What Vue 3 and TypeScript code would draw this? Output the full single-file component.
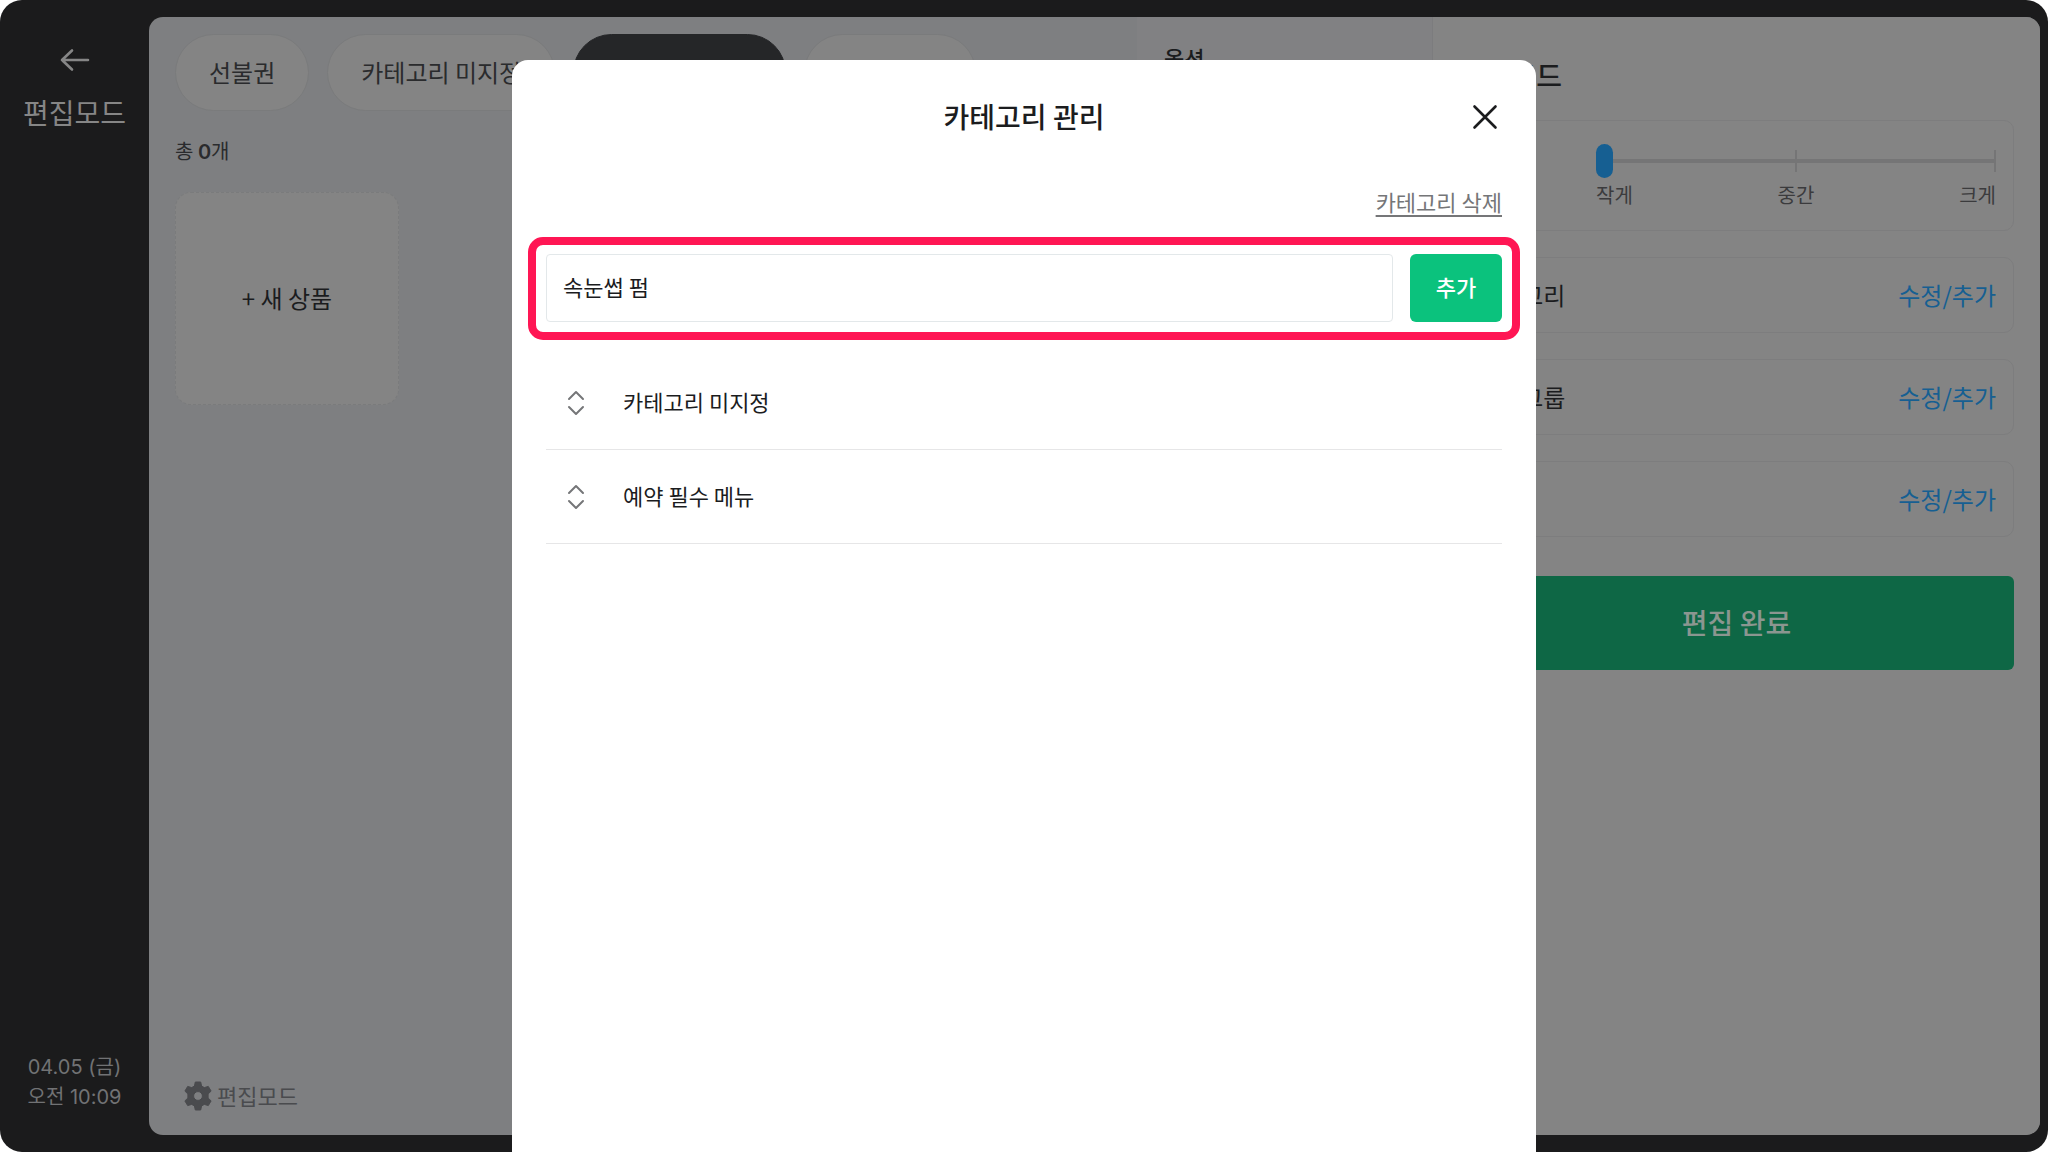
<script setup lang="ts">
import { ref } from 'vue'

const newCategory = ref('속눈썹 펌')
const cardSize = ref(0)

const categories = ref(['카테고리 미지정', '예약 필수 메뉴'])
const sizes = ['작게', '중간', '크게']
const settings = [
  { id: 'category', label: '카테고리' },
  { id: 'option', label: '옵션그룹' },
  { id: 'etc', label: '' },
]

function addCategory(): void {
  const name = newCategory.value.trim()
  if (name) {
    categories.value.push(name)
    newCategory.value = ''
  }
}
</script>

<template>
  <div class="frame">
    <aside class="sidebar">
      <div class="side-top">
        <button class="back" type="button" aria-label="뒤로">
          <svg width="32" height="24" viewBox="0 0 32 24" fill="none" stroke="currentColor" stroke-width="2.6" stroke-linecap="round" stroke-linejoin="round">
            <path d="M30 12H4M14 2.500L4 12l10 9.500" />
          </svg>
        </button>
        <span class="side-title">편집모드</span>
      </div>
      <p class="clock">04.05 (금)<br />오전 10:09</p>
    </aside>

    <div class="workspace">
      <main class="products">
        <nav class="tabs">
          <button class="tab" type="button">선불권</button>
          <button class="tab" type="button">카테고리 미지정</button>
          <button class="tab active" type="button">예약 필수 메뉴</button>
          <button class="tab blank" type="button" aria-label="카테고리"></button>
        </nav>
        <p class="count">총 <b>0</b>개</p>
        <button class="new-product" type="button">+ 새 상품</button>
        <button class="mode" type="button">
          <svg width="28" height="30" viewBox="0 0 28 30" fill="currentColor" fill-rule="evenodd">
            <path d="M11.3 1h5.4l.9 4.1 2.7 1.5 4-1.2 2.8 4.7-3 2.9v4l3 2.9-2.8 4.7-4-1.2-2.7 1.5-.9 4.1h-5.4l-.9-4.1-2.7-1.5-4 1.2L.9 19.900l3-2.9v-4l-3-2.900 2.8-4.700 4 1.200 2.700-1.500zM14 10.600a4.400 4.400 0 1 0 0 8.800 4.400 4.400 0 0 0 0-8.800z" stroke="currentColor" stroke-width="1" stroke-linejoin="round" />
          </svg>
          <span>편집모드</span>
        </button>
      </main>

      <section class="options">
        <h2 class="options-title">옵션</h2>
      </section>

      <section class="settings">
        <h2 class="settings-title">편집모드</h2>
        <div class="card size-card">
          <div class="size">
            <input v-model.number="cardSize" class="range" type="range" min="0" max="2" step="1" aria-label="크기" />
            <div class="size-labels">
              <span v-for="s in sizes" :key="s">{{ s }}</span>
            </div>
          </div>
        </div>
        <div v-for="item in settings" :key="item.id" class="card">
          <span class="card-label">{{ item.label }}</span>
          <button class="edit" type="button">수정/추가</button>
        </div>
        <button class="done" type="button">편집 완료</button>
      </section>
    </div>

    <section class="modal" role="dialog" aria-modal="true" aria-labelledby="modal-title">
      <header class="modal-head">
        <h1 id="modal-title">카테고리 관리</h1>
        <button class="close" type="button" aria-label="닫기">
          <svg width="26" height="26" viewBox="0 0 26 26" fill="none" stroke="currentColor" stroke-width="2.6" stroke-linecap="round">
            <path d="M2.500 2.500l21 21M23.500 2.500l-21 21" />
          </svg>
        </button>
      </header>
      <div class="modal-tools">
        <button class="remove" type="button">카테고리 삭제</button>
      </div>
      <form class="add-form" @submit.prevent="addCategory">
        <input v-model="newCategory" class="name" type="text" aria-label="카테고리 이름" />
        <button class="add" type="submit">추가</button>
      </form>
      <ul class="list">
        <li v-for="c in categories" :key="c" class="row">
          <svg width="18" height="26" viewBox="0 0 18 26" fill="none" stroke="#757678" stroke-width="2" stroke-linecap="round" stroke-linejoin="round">
            <path d="M2 9l7-7 7 7M2 17l7 7 7-7" />
          </svg>
          <span class="row-name">{{ c }}</span>
        </li>
      </ul>
    </section>
  </div>
</template>

<style>
body {
  margin: 0;
  background: #fff;
}
</style>

<style scoped>
* {
  box-sizing: border-box;
}

.frame {
  display: flex;
  min-height: 100vh;
  padding: 17px 8px 17px 0;
  border-radius: 22px;
  background: #1b1b1c;
  color: #1b1c1e;
  font-family: "Noto Sans CJK KR", "Noto Sans", sans-serif;
}

button {
  padding: 0 0 2px;
  border: 0;
  background: none;
  color: inherit;
  font: inherit;
  cursor: pointer;
}

h1,
h2,
p,
ul {
  margin: 0;
  padding: 0;
}

.sidebar {
  display: flex;
  flex: none;
  flex-direction: column;
  align-items: center;
  justify-content: space-between;
  width: 149px;
  padding: 31px 0 23px;
  color: #868686;
}

.side-top {
  display: flex;
  flex-direction: column;
  align-items: center;
  gap: 18px;
}

.back {
  display: flex;
}

.side-title {
  font-size: 28px;
  line-height: 40px;
}

.clock {
  color: #717274;
  font-family: Inter, "Noto Sans CJK KR", sans-serif;
  font-size: 20px;
  line-height: 30px;
  text-align: center;
}

.workspace {
  display: flex;
  flex: 1;
  min-width: 0;
  overflow: hidden;
  border-radius: 14px;
  background: #7e7f81;
}

.products {
  display: flex;
  flex: 1;
  flex-direction: column;
  align-items: flex-start;
  min-width: 0;
  padding: 17px 26px 22px;
}

.tabs {
  display: flex;
  gap: 18px;
}

.tab {
  flex: none;
  height: 77px;
  padding: 0 33px 2px;
  border: 1px solid #7a7b7c;
  border-radius: 40px;
  background: #848484;
  color: #2a2b2d;
  font-size: 24px;
}

.tab.active {
  padding: 0 34px 2px;
  border-color: #252628;
  background: #252628;
  color: #848484;
}

.tab.blank {
  width: 172px;
}

.count {
  margin-top: 25px;
  color: #2a2b2d;
  font-size: 20px;
  line-height: 30px;
}

.count b {
  font-family: Inter, sans-serif;
  font-weight: 600;
}

.new-product {
  width: 224px;
  height: 213px;
  margin-top: 25px;
  border: 1px dashed #7a7b7c;
  border-radius: 16px;
  background: #848484;
  font-size: 24px;
}

.mode {
  display: flex;
  align-items: center;
  gap: 5px;
  margin-top: auto;
  margin-left: 9px;
  padding: 0;
  color: #4a4b4e;
  font-size: 22px;
  line-height: 32px;
}

.mode span {
  padding-bottom: 2px;
}

.options {
  flex: none;
  width: 296px;
  padding: 24px 27px;
  border-right: 1px solid #7c7c7e;
  background: #818183;
}

.options-title {
  font-size: 22px;
  font-weight: 500;
  line-height: 32px;
}

.settings {
  display: flex;
  flex: none;
  flex-direction: column;
  width: 607px;
  padding: 38px 26px 0;
  background: #848484;
}

.settings-title {
  margin-bottom: 25px;
  font-size: 28px;
  font-weight: 500;
  line-height: 40px;
}

.card {
  display: flex;
  align-items: center;
  justify-content: space-between;
  height: 76px;
  margin-bottom: 26px;
  padding: 0 17px;
  border: 1px solid #7d7d7e;
  border-radius: 10px;
  font-size: 24px;
}

.card-label {
  padding-bottom: 2px;
}

.size-card {
  justify-content: flex-end;
  height: 111px;
}

.size {
  width: 400px;
  padding-top: 2px;
}

.range {
  display: block;
  width: 100%;
  height: 36px;
  margin: 0;
  background:
    linear-gradient(#757576, #757576) center / 2px 22px no-repeat,
    linear-gradient(#757576, #757576) right center / 2px 22px no-repeat,
    linear-gradient(#757576, #757576) center / 100% 4px no-repeat;
  appearance: none;
}

.range::-webkit-slider-thumb {
  width: 17px;
  height: 34px;
  border-radius: 9px;
  background: #165f92;
  appearance: none;
}

.size-labels {
  display: flex;
  justify-content: space-between;
  color: #3b3b3d;
  font-size: 20px;
  line-height: 32px;
}

.edit {
  color: #165f92;
}

.done {
  height: 94px;
  margin-top: 13px;
  border-radius: 6px;
  background: #0e6745;
  color: #8b9690;
  font-size: 28px;
  font-weight: 500;
}

.modal {
  position: fixed;
  top: 60px;
  bottom: 0;
  left: 25%;
  width: 50%;
  padding: 0 16px;
  border-radius: 16px 16px 0 0;
  background: #fff;
}

.modal-head {
  display: grid;
  grid-template-columns: 50px 1fr 50px;
  align-items: center;
  height: 114px;
  padding: 0 10px;
}

.modal-head h1 {
  grid-column: 2;
  padding-bottom: 2px;
  font-size: 28px;
  font-weight: 500;
  text-align: center;
}

.close {
  display: flex;
  justify-content: center;
  padding: 0;
}

.modal-tools {
  display: flex;
  justify-content: flex-end;
  height: 63px;
  padding: 11px 18px 0;
}

.remove {
  height: 32px;
  padding: 0;
  color: #757678;
  font-size: 22px;
  line-height: 32px;
  text-decoration: underline;
  text-decoration-thickness: 2px;
  text-underline-offset: 4px;
}

.add-form {
  display: flex;
  gap: 17px;
  padding: 9px 10px 10px;
  border: 8px solid #ff1654;
  border-radius: 15px;
}

.name {
  flex: 1;
  min-width: 0;
  height: 68px;
  padding: 0 16px 4px;
  border: 1px solid #e3e8ea;
  border-radius: 4px;
  outline: 0;
  background: #fff;
  color: #1b1c1e;
  font: inherit;
  font-size: 22px;
}

.add {
  width: 92px;
  height: 68px;
  padding-bottom: 4px;
  border-radius: 6px;
  background: #0bc27d;
  color: #fff;
  font-size: 22px;
  font-weight: 500;
}

.list {
  margin: 16px 18px 0;
  list-style: none;
}

.row {
  display: flex;
  align-items: center;
  gap: 38px;
  height: 94px;
  padding: 0 21px;
  border-bottom: 1px solid #e6e6e7;
  font-size: 22px;
}

.row-name {
  padding-bottom: 4px;
}
</style>
